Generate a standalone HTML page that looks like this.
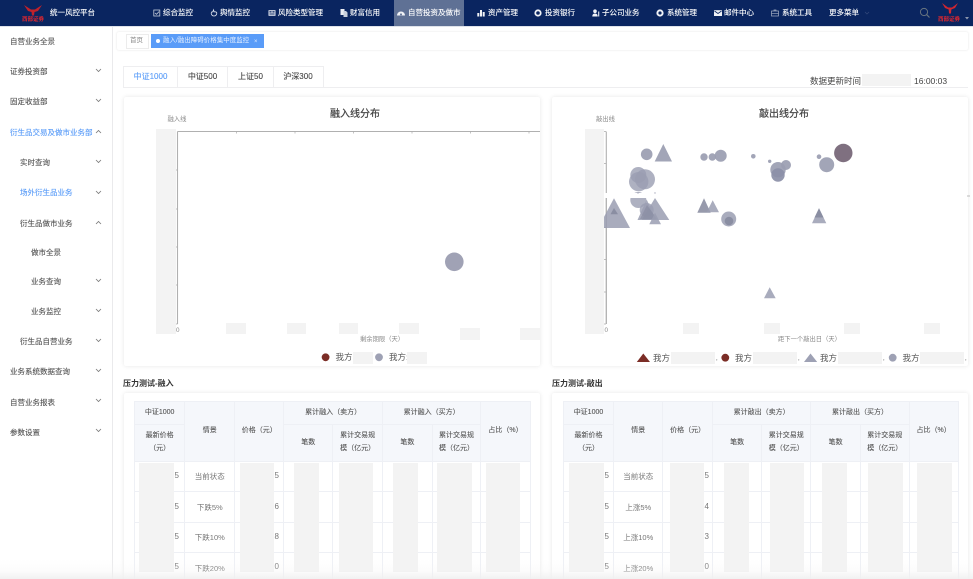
<!DOCTYPE html>
<html lang="zh">
<head>
<meta charset="utf-8">
<title>融入/融出障碍价格集中度监控</title>
<style>
html,body{margin:0;padding:0;background:#fff}
#app{position:relative;width:973px;height:579px;overflow:hidden;background:#fff;font-family:"Liberation Sans","Noto Sans CJK SC",sans-serif;color:#555;filter:blur(.35px)}
#app div,#app span.a{position:absolute}
.t{white-space:nowrap;line-height:10px}
.nav{font-size:7.5px;color:#fff;top:7.5px;-webkit-text-stroke:.12px #fff}
.ic{position:absolute;top:8.5px;width:8px;height:8px;overflow:visible}
.side{font-size:7.5px;color:#555;white-space:nowrap;line-height:10px;-webkit-text-stroke:.12px #555}
.chev{position:absolute;left:95px;width:7px;height:5px}
.card{background:#fff;border-radius:2px;box-shadow:0 0 4px rgba(0,0,0,.1)}
.g{background:#f3f3f3}
.title{font-size:10px;color:#444;white-space:nowrap;line-height:12px;-webkit-text-stroke:.25px #444}
.sm{font-size:6.3px;color:#888;white-space:nowrap;line-height:8px}
.leg{font-size:8.5px;color:#555;white-space:nowrap;line-height:10px}
table{position:absolute;border-collapse:collapse;table-layout:fixed;font-size:7px;color:#555;text-align:center}
td,th{border:1px solid #eef0f5;padding:0;font-weight:normal;line-height:12.5px}
th{background:#f5f7fb;color:#555;-webkit-text-stroke:.1px #555}
td{color:#777;font-size:7.5px;padding-top:2px}
.d{font-size:8px;color:#777;white-space:nowrap;line-height:8px}
.head{font-size:8px;font-weight:bold;color:#333;white-space:nowrap;line-height:10px}
.tab{font-size:8px;color:#444;white-space:nowrap;line-height:10px;top:72px;text-align:center;-webkit-text-stroke:.1px #444}
</style>
</head>
<body>
<div id="app">

<!-- header -->
<div style="left:0;top:0;width:973px;height:26px;background:#0a2560"></div>
<div style="left:394px;top:0;width:70px;height:26px;background:#5f7195"></div>
<div style="left:0;top:26px;width:973px;height:1px;background:#dfe3ea"></div>

<svg style="position:absolute;left:21px;top:4px" width="24" height="12" viewBox="0 0 24 12">
<path d="M3 1 L10 5.500 L14 5.500 L21 1 L17 7 L13.500 8 L13 11.500 L11 11.500 L10.500 8 L7 7 Z" fill="#c0222b"/>
</svg>
<div class="t" style="left:22px;top:14.500px;font-size:5.500px;font-weight:bold;color:#e0262e">西部证券</div>
<div class="t nav" style="left:50px">统一风控平台</div>

<svg class="ic" style="left:153px" viewBox="0 0 8 8"><rect x=".8" y="1" width="6" height="6" fill="none" stroke="#c5ccdb" stroke-width=".8"/><path d="M2 4l1.500 1.300L6 2.600" fill="none" stroke="#c5ccdb" stroke-width=".8"/></svg>
<div class="t nav" style="left:163px">综合监控</div>
<svg class="ic" style="left:210px" viewBox="0 0 8 8"><path d="M1.200 4.200a2.800 2.800 0 1 0 5.600 0c0-1-.8-1.400-1.800-1.400H4L3.600.8 2.600 3H1.600z" fill="none" stroke="#dfe4ee" stroke-width=".8"/></svg>
<div class="t nav" style="left:220px">舆情监控</div>
<svg class="ic" style="left:268px" viewBox="0 0 8 8"><rect x=".5" y="1.200" width="7" height="5.600" fill="#e3e7ef"/><rect x="1.400" y="2.200" width="2.200" height="1.300" fill="#0a2560"/><rect x="4.400" y="2.200" width="2.200" height="1.300" fill="#0a2560"/><rect x="1.400" y="4.500" width="5.200" height="1" fill="#0a2560"/></svg>
<div class="t nav" style="left:278px">风险类型管理</div>
<svg class="ic" style="left:340px" viewBox="0 0 8 8"><path d="M.5 0h4v6h-4z" fill="#e9ecf3"/><path d="M3.500 2h2.500l1.500 1.500V8h-4z" fill="#c8cfdd"/></svg>
<div class="t nav" style="left:350px">财富信用</div>
<svg class="ic" style="left:397px" viewBox="0 0 8 8"><path d="M0 6.500a4 4 0 0 1 8 0z" fill="#f0f2f6"/><circle cx="4" cy="5.400" r="1" fill="#5f7195"/></svg>
<div class="t nav" style="left:408px">自营投资及做市</div>
<svg class="ic" style="left:477px" viewBox="0 0 8 8"><path d="M.3 4h2v3.500h-2zM3 1h2v6.500H3zM5.700 3h2v4.500h-2z" fill="#f0f2f6"/></svg>
<div class="t nav" style="left:488px">资产管理</div>
<svg class="ic" style="left:534px" viewBox="0 0 8 8"><circle cx="4" cy="4" r="2.700" fill="none" stroke="#f0f2f6" stroke-width="1.800"/></svg>
<div class="t nav" style="left:545px">投资银行</div>
<svg class="ic" style="left:592px" viewBox="0 0 8 8"><circle cx="3" cy="2.200" r="1.800" fill="#f0f2f6"/><path d="M.3 7.500c0-2 1-3 2.700-3s2.700 1 2.700 3z" fill="#f0f2f6"/><path d="M6 2.500h1.300V7.500H6z" fill="#c8cfdd"/></svg>
<div class="t nav" style="left:602px">子公司业务</div>
<svg class="ic" style="left:656px" viewBox="0 0 8 8"><circle cx="4" cy="4" r="2.600" fill="none" stroke="#f0f2f6" stroke-width="2"/></svg>
<div class="t nav" style="left:667px">系统管理</div>
<svg class="ic" style="left:714px" viewBox="0 0 8 8"><rect x="0" y="1.200" width="8" height="5.800" fill="#f0f2f6"/><path d="M.5 2l3.500 2.500L7.500 2" fill="none" stroke="#0a2560" stroke-width=".8"/></svg>
<div class="t nav" style="left:724px">邮件中心</div>
<svg class="ic" style="left:771px" viewBox="0 0 8 8"><rect x=".5" y="2" width="7" height="5" fill="none" stroke="#aab3c6" stroke-width=".7"/><path d="M3 2V1h2v1M.5 4.300h7" fill="none" stroke="#aab3c6" stroke-width=".7"/></svg>
<div class="t nav" style="left:782px">系统工具</div>
<div class="t nav" style="left:829px">更多菜单</div>
<svg style="position:absolute;left:864px;top:11px" width="6" height="4" viewBox="0 0 6 4"><path d="M1 1l2 2 2-2" fill="none" stroke="#33487a" stroke-width=".7"/></svg>

<svg style="position:absolute;left:919px;top:7px" width="12" height="12" viewBox="0 0 12 12"><circle cx="5" cy="5" r="3.600" fill="none" stroke="#67747f" stroke-width="1"/><path d="M7.600 7.600L10.500 10.500" stroke="#67747f" stroke-width="1.200"/></svg>
<svg style="position:absolute;left:938px;top:1.500px" width="24" height="13" viewBox="0 0 24 13"><path d="M4 1 L10 5.500 L14 5.500 L20 1 L17 6 L13.300 7.500 L13 11.500 L11 11.500 L10.700 7.500 L7 6 Z" fill="#d02630"/></svg>
<div class="t" style="left:938px;top:15px;font-size:5.500px;font-weight:bold;color:#e0262e">西部证券</div>
<svg style="position:absolute;left:965px;top:17px" width="5" height="3" viewBox="0 0 5 3"><path d="M0 0h4L2 2.500z" fill="#8c97ad"/></svg>

<!-- sidebar -->
<div style="left:112px;top:27px;width:1px;height:552px;background:#eaeaec"></div>
<div class="side" style="left:10px;top:37px">自营业务全景</div>
<div class="side" style="left:10px;top:67px">证券投资部</div>
<div class="side" style="left:10px;top:97px">固定收益部</div>
<div class="side" style="left:10px;top:128px;color:#5a9cf8;-webkit-text-stroke:.12px #5a9cf8">衍生品交易及做市业务部</div>
<div class="side" style="left:20px;top:158px">实时查询</div>
<div class="side" style="left:20px;top:188px;color:#5a9cf8;-webkit-text-stroke:.12px #5a9cf8">场外衍生品业务</div>
<div class="side" style="left:20px;top:219px">衍生品做市业务</div>
<div class="side" style="left:31px;top:248px">做市全景</div>
<div class="side" style="left:31px;top:277px">业务查询</div>
<div class="side" style="left:31px;top:307px">业务监控</div>
<div class="side" style="left:20px;top:337px">衍生品自营业务</div>
<div class="side" style="left:10px;top:367px">业务系统数据查询</div>
<div class="side" style="left:10px;top:398px">自营业务报表</div>
<div class="side" style="left:10px;top:428px">参数设置</div>

<svg class="chev" style="top:68px" viewBox="0 0 7 5"><path d="M1 1l2.500 2.500L6 1" fill="none" stroke="#777" stroke-width=".8"/></svg>
<svg class="chev" style="top:98px" viewBox="0 0 7 5"><path d="M1 1l2.500 2.500L6 1" fill="none" stroke="#777" stroke-width=".8"/></svg>
<svg class="chev" style="top:129px" viewBox="0 0 7 5"><path d="M1 4l2.500-2.500L6 4" fill="none" stroke="#777" stroke-width=".8"/></svg>
<svg class="chev" style="top:159px" viewBox="0 0 7 5"><path d="M1 1l2.500 2.500L6 1" fill="none" stroke="#777" stroke-width=".8"/></svg>
<svg class="chev" style="top:190px" viewBox="0 0 7 5"><path d="M1 1l2.500 2.500L6 1" fill="none" stroke="#777" stroke-width=".8"/></svg>
<svg class="chev" style="top:220px" viewBox="0 0 7 5"><path d="M1 4l2.500-2.500L6 4" fill="none" stroke="#777" stroke-width=".8"/></svg>
<svg class="chev" style="top:278px" viewBox="0 0 7 5"><path d="M1 1l2.500 2.500L6 1" fill="none" stroke="#777" stroke-width=".8"/></svg>
<svg class="chev" style="top:308px" viewBox="0 0 7 5"><path d="M1 1l2.500 2.500L6 1" fill="none" stroke="#777" stroke-width=".8"/></svg>
<svg class="chev" style="top:338px" viewBox="0 0 7 5"><path d="M1 1l2.500 2.500L6 1" fill="none" stroke="#777" stroke-width=".8"/></svg>
<svg class="chev" style="top:368px" viewBox="0 0 7 5"><path d="M1 1l2.500 2.500L6 1" fill="none" stroke="#777" stroke-width=".8"/></svg>
<svg class="chev" style="top:398px" viewBox="0 0 7 5"><path d="M1 1l2.500 2.500L6 1" fill="none" stroke="#777" stroke-width=".8"/></svg>
<svg class="chev" style="top:428px" viewBox="0 0 7 5"><path d="M1 1l2.500 2.500L6 1" fill="none" stroke="#777" stroke-width=".8"/></svg>

<!-- tag bar -->
<div style="left:117px;top:31.500px;width:851px;height:18px;background:#fff;border-radius:2px;box-shadow:0 0 2px rgba(0,0,0,.12)"></div>
<div style="left:126px;top:34px;width:21px;height:13px;border:1px solid #ececec;background:#fff"></div>
<div class="t" style="left:130px;top:36px;font-size:6.500px;color:#888">首页</div>
<div style="left:151px;top:33.500px;width:113px;height:14px;background:#5a9cf8"></div>
<div style="left:156px;top:39px;width:4px;height:4px;border-radius:50%;background:#fff"></div>
<div class="t" style="left:163px;top:36px;font-size:6.500px;color:#e6f0ff">融入/融出障碍价格集中度监控</div>
<div class="t" style="left:254px;top:36.500px;font-size:6px;color:#dce9ff">×</div>

<!-- tabs -->
<div style="left:123px;top:87px;width:845px;height:1px;background:#eeeef0"></div>
<div style="left:123px;top:66px;width:199px;height:21px;border:1px solid #eeeef0;border-bottom:none"></div>
<div style="left:177px;top:66px;width:1px;height:21px;background:#eeeef0"></div>
<div style="left:227px;top:66px;width:1px;height:21px;background:#eeeef0"></div>
<div style="left:272.500px;top:66px;width:1px;height:21px;background:#eeeef0"></div>
<div class="tab" style="left:124px;width:53px;color:#5a9cf8;-webkit-text-stroke:.1px #5a9cf8">中证1000</div>
<div class="tab" style="left:178px;width:49px">中证500</div>
<div class="tab" style="left:228px;width:45px">上证50</div>
<div class="tab" style="left:273px;width:50px">沪深300</div>

<div class="t" style="left:810px;top:76px;font-size:8.500px;color:#444">数据更新时间</div>
<div class="g" style="left:862px;top:74px;width:49px;height:12px"></div>
<div class="t" style="left:914px;top:76px;font-size:8.500px;color:#444">16:00:03</div>

<!-- left chart -->
<div class="card" style="left:124px;top:97px;width:416px;height:269px"></div>
<div class="title" style="left:330px;top:109px">融入线分布</div>
<div class="sm" style="left:167.500px;top:116px">融入线</div>
<svg style="position:absolute;left:124px;top:97px" width="416" height="269" viewBox="124 97 416 269">
<path d="M177.500 131.500V324M177.500 131.500H540" fill="none" stroke="#b0b0b0" stroke-width="1.100"/>
<path d="M175.500 170H177.500M175.500 209H177.500M175.500 247H177.500M175.500 285H177.500M175.500 324H177.500M236.500 131.500v2M295 131.500v2M353.500 131.500v2M412 131.500v2M470.500 131.500v2M529 131.500v2" stroke="#aaa" stroke-width=".7"/>
<circle cx="454.300" cy="261.800" r="9.300" fill="#a0a2b5"/>
</svg>
<div class="g" style="left:156px;top:129px;width:19.500px;height:205px"></div>
<div class="g" style="left:226px;top:323px;width:20px;height:11px"></div>
<div class="g" style="left:287px;top:323px;width:19px;height:11px"></div>
<div class="g" style="left:339px;top:323px;width:19px;height:11px"></div>
<div class="g" style="left:399px;top:323px;width:20px;height:11px"></div>
<div class="g" style="left:460px;top:328px;width:20px;height:12px"></div>
<div class="g" style="left:520px;top:328px;width:20px;height:12px"></div>
<div class="sm" style="left:176px;top:327px;color:#888">0</div>
<div class="sm" style="left:360px;top:336px">剩余期限（天）</div>
<svg style="position:absolute;left:320px;top:352px" width="70" height="11"><circle cx="5.600" cy="5.300" r="3.900" fill="#7b2d26"/><circle cx="59" cy="5.300" r="3.900" fill="#9ea1b4"/></svg>
<div class="leg" style="left:335.500px;top:352px">我方</div>
<div class="g" style="left:353px;top:352px;width:20px;height:12px"></div>
<div class="leg" style="left:389px;top:352px">我方:</div>
<div class="g" style="left:407px;top:352px;width:20px;height:12px"></div>

<!-- right chart -->
<div class="card" style="left:552px;top:97px;width:416px;height:269px"></div>
<div class="title" style="left:759px;top:109px">敲出线分布</div>
<div class="sm" style="left:596px;top:116px">敲出线</div>
<svg style="position:absolute;left:552px;top:97px" width="421" height="269" viewBox="552 97 421 269">
<path d="M606.300 131.500V324" fill="none" stroke="#b0b0b0" stroke-width="1.100"/>
<path d="M604 131.500H606M604 163.500H606M604 195.500H606M604 227.500H606M604 259.500H606M604 292H606M604 324H606" stroke="#aaa" stroke-width=".7"/>
<g fill="#9a9db1" fill-opacity=".92">
<circle cx="646.700" cy="154.300" r="5.800"/>
<path d="M663.300 144 L672 161.500 H654.700Z"/>
<circle cx="704" cy="157" r="3.700"/>
<circle cx="712.300" cy="157" r="3.700"/>
<circle cx="720.700" cy="155.700" r="6"/>
<circle cx="753.300" cy="156.300" r="2.300"/>
<circle cx="769.700" cy="161.300" r="1.700"/>
<circle cx="786" cy="165" r="5"/>
<circle cx="778" cy="169.700" r="7.700"/>
<circle cx="778" cy="175" r="6.700" fill="#8b8fa7"/>
<circle cx="819" cy="156.700" r="2.300"/>
<circle cx="826.700" cy="164.700" r="7.500"/>
</g>
<circle cx="843.300" cy="153" r="9.200" fill="#7f7080"/>
<g fill="#9a9db1" fill-opacity=".8">
<circle cx="638.300" cy="175" r="8"/>
<circle cx="645" cy="179.300" r="10"/>
<circle cx="638.700" cy="181.700" r="9.700"/>
<circle cx="638.300" cy="200" r="8"/>
<circle cx="646.700" cy="210" r="7"/>
</g>
<rect x="603" y="193" width="64" height="5" fill="#fff"/>
<path d="M606.300 198V324" fill="none" stroke="#b0b0b0" stroke-width="1.100"/>
<circle cx="638" cy="193" r=".7" fill="#a8aabb"/>
<circle cx="655" cy="193" r=".7" fill="#a8aabb"/>
<g fill="#9a9db1" fill-opacity=".85">
<path d="M614 198.300L630 228H598Z"/>
<path d="M614 208L618 214.300H610.500Z" fill="#85889e"/>
<path d="M646.700 199.500L656 220H637.500Z"/>
<path d="M655 198L669.300 220H641.700Z"/>
<path d="M647 205L657 219H640Z" fill="#85889e" fill-opacity=".6"/>
<path d="M655 212.700L661 224.300H649.300Z"/>
<path d="M704 198.300L710.700 212.700H697.300Z" fill="#85889e"/>
<path d="M712.700 200.300L719 212.300H706.700Z"/>
<circle cx="728.700" cy="219" r="7.500"/>
<circle cx="729" cy="221" r="4.300" fill="#85889e"/>
<path d="M819 208.300L826.300 223.300H812Z"/>
<path d="M819 208.300L823.500 217.500H814.500Z" fill="#85889e"/>
<path d="M769.700 287.300L775.700 298.300H764Z"/>
</g>
<rect x="967" y="195.500" width="3" height="1" fill="#bbb"/>
</svg>
<div class="g" style="left:584.500px;top:129px;width:19.500px;height:205px"></div>
<div class="g" style="left:683px;top:323px;width:16px;height:11px"></div>
<div class="g" style="left:764px;top:323px;width:15.500px;height:11px"></div>
<div class="g" style="left:844px;top:323px;width:16px;height:11px"></div>
<div class="g" style="left:924px;top:323px;width:16px;height:11px"></div>
<div class="sm" style="left:604.500px;top:327px;color:#888">0</div>
<div class="sm" style="left:778px;top:336px">距下一个敲出日（天）</div>
<svg style="position:absolute;left:636px;top:352px" width="270" height="12" viewBox="636 352 270 12">
<path d="M643.300 353.500L650 362H636.800Z" fill="#7b2d26"/>
<circle cx="725.300" cy="357.700" r="3.900" fill="#7b2d26"/>
<path d="M810.500 353.500L817.200 362H804Z" fill="#9ea1b4"/>
<circle cx="892.700" cy="357.700" r="3.900" fill="#9ea1b4"/>
</svg>
<div class="leg" style="left:653px;top:352.500px">我方</div>
<div class="g" style="left:671px;top:352px;width:44px;height:12px"></div>
<div class="leg" style="left:716px;top:354px;font-size:6px">,</div>
<div class="leg" style="left:735px;top:352.500px">我方</div>
<div class="g" style="left:753px;top:352px;width:44px;height:12px"></div>
<div class="leg" style="left:798px;top:354px;font-size:6px">,</div>
<div class="leg" style="left:820px;top:352.500px">我方</div>
<div class="g" style="left:838px;top:352px;width:44px;height:12px"></div>
<div class="leg" style="left:883px;top:354px;font-size:6px">,</div>
<div class="leg" style="left:902.500px;top:352.500px">我方</div>
<div class="g" style="left:920px;top:352px;width:44px;height:12px"></div>
<div class="leg" style="left:965px;top:354px;font-size:6px">,</div>

<!-- left table -->
<div class="head" style="left:123px;top:378.500px">压力测试-融入</div>
<div class="card" style="left:124px;top:393px;width:416px;height:200px"></div>
<table style="left:134px;top:401px;width:396px">
<colgroup><col style="width:50.300px"><col style="width:50px"><col style="width:49px"><col style="width:49px"><col style="width:49.700px"><col style="width:49.700px"><col style="width:48.600px"><col style="width:49.400px"></colgroup>
<tr style="height:23.300px"><th>中证1000</th><th rowspan="2">情景</th><th rowspan="2">价格（元）</th><th colspan="2">累计融入（卖方）</th><th colspan="2">累计融入（买方）</th><th rowspan="2">占比（%）</th></tr>
<tr style="height:36.400px"><th>最新价格<br>（元）</th><th>笔数</th><th>累计交易规<br>模（亿元）</th><th>笔数</th><th>累计交易规<br>模（亿元）</th></tr>
<tr style="height:30.600px"><td></td><td>当前状态</td><td></td><td></td><td></td><td></td><td></td><td></td></tr>
<tr style="height:30.400px"><td></td><td>下跌5%</td><td></td><td></td><td></td><td></td><td></td><td></td></tr>
<tr style="height:30.600px"><td></td><td>下跌10%</td><td></td><td></td><td></td><td></td><td></td><td></td></tr>
<tr style="height:30.600px"><td></td><td>下跌20%</td><td></td><td></td><td></td><td></td><td></td><td></td></tr>
</table>
<div class="d" style="left:174.500px;top:472px">5</div><div class="d" style="left:174.500px;top:503px">5</div><div class="d" style="left:174.500px;top:533px">5</div><div class="d" style="left:174.500px;top:563px">5</div>
<div class="d" style="left:274.500px;top:472px">5</div><div class="d" style="left:274.500px;top:503px">6</div><div class="d" style="left:274.500px;top:533px">8</div><div class="d" style="left:274.500px;top:563px">0</div>
<div class="g" style="left:139.300px;top:463px;width:34.700px;height:109px"></div>
<div class="g" style="left:240px;top:463px;width:34.300px;height:109px"></div>
<div class="g" style="left:293.700px;top:463px;width:25.300px;height:109px"></div>
<div class="g" style="left:338.700px;top:463px;width:34.300px;height:109px"></div>
<div class="g" style="left:393px;top:463px;width:25.300px;height:109px"></div>
<div class="g" style="left:437.300px;top:463px;width:34.700px;height:109px"></div>
<div class="g" style="left:486px;top:463px;width:34px;height:109px"></div>

<!-- right table -->
<div class="head" style="left:552px;top:378.500px">压力测试-敲出</div>
<div class="card" style="left:552px;top:393px;width:416px;height:200px"></div>
<table style="left:562.700px;top:401px;width:395px">
<colgroup><col style="width:50.600px"><col style="width:49px"><col style="width:49.700px"><col style="width:49.300px"><col style="width:49px"><col style="width:49.700px"><col style="width:48.700px"><col style="width:49px"></colgroup>
<tr style="height:23.300px"><th>中证1000</th><th rowspan="2">情景</th><th rowspan="2">价格（元）</th><th colspan="2">累计敲出（卖方）</th><th colspan="2">累计敲出（买方）</th><th rowspan="2">占比（%）</th></tr>
<tr style="height:36.400px"><th>最新价格<br>（元）</th><th>笔数</th><th>累计交易规<br>模（亿元）</th><th>笔数</th><th>累计交易规<br>模（亿元）</th></tr>
<tr style="height:30.600px"><td></td><td>当前状态</td><td></td><td></td><td></td><td></td><td></td><td></td></tr>
<tr style="height:30.400px"><td></td><td>上涨5%</td><td></td><td></td><td></td><td></td><td></td><td></td></tr>
<tr style="height:30.600px"><td></td><td>上涨10%</td><td></td><td></td><td></td><td></td><td></td><td></td></tr>
<tr style="height:30.600px"><td></td><td>上涨20%</td><td></td><td></td><td></td><td></td><td></td><td></td></tr>
</table>
<div class="d" style="left:604.500px;top:472px">5</div><div class="d" style="left:604.500px;top:503px">5</div><div class="d" style="left:604.500px;top:533px">5</div><div class="d" style="left:604.500px;top:563px">5</div>
<div class="d" style="left:704.500px;top:472px">5</div><div class="d" style="left:704.500px;top:503px">4</div><div class="d" style="left:704.500px;top:533px">3</div><div class="d" style="left:704.500px;top:563px">0</div>
<div class="g" style="left:569px;top:463px;width:35px;height:109px"></div>
<div class="g" style="left:669.700px;top:463px;width:34.600px;height:109px"></div>
<div class="g" style="left:724px;top:463px;width:25px;height:109px"></div>
<div class="g" style="left:769.700px;top:463px;width:34.600px;height:109px"></div>
<div class="g" style="left:822px;top:463px;width:25.300px;height:109px"></div>
<div class="g" style="left:868.300px;top:463px;width:34.700px;height:109px"></div>
<div class="g" style="left:917px;top:463px;width:34.700px;height:109px"></div>

<!-- bottom fade -->
<div style="left:0;top:559px;width:973px;height:20px;background:linear-gradient(to bottom,rgba(242,242,242,0),rgba(242,242,242,.25) 60%,rgba(240,240,240,.9))"></div>

</div>
</body>
</html>
